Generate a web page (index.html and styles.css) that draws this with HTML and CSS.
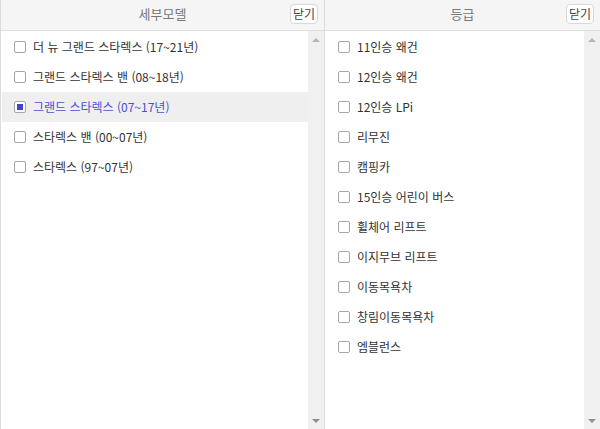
FILE: index.html
```html
<!DOCTYPE html>
<html lang="ko">
<head>
<meta charset="utf-8">
<link rel="stylesheet" href="styles.css">
</head>
<body>
<div class="wrap">
  <section class="panel panel-left">
    <header class="head"><span class="title">세부모델</span><button class="close">닫기</button></header>
    <div class="body">
      <ul class="list">
        <li class="row"><span class="cb"></span><span class="label">더 뉴 그랜드 스타렉스 (17~21년)</span></li>
        <li class="row"><span class="cb"></span><span class="label">그랜드 스타렉스 밴 (08~18년)</span></li>
        <li class="row selected"><span class="cb checked"></span><span class="label">그랜드 스타렉스 (07~17년)</span></li>
        <li class="row"><span class="cb"></span><span class="label">스타렉스 밴 (00~07년)</span></li>
        <li class="row"><span class="cb"></span><span class="label">스타렉스 (97~07년)</span></li>
      </ul>
      <div class="scroll"><span class="arr up"></span><span class="arr down"></span></div>
    </div>
  </section>
  <section class="panel panel-right">
    <header class="head"><span class="title">등급</span><button class="close">닫기</button></header>
    <div class="body">
      <ul class="list">
        <li class="row"><span class="cb"></span><span class="label">11인승 왜건</span></li>
        <li class="row"><span class="cb"></span><span class="label">12인승 왜건</span></li>
        <li class="row"><span class="cb"></span><span class="label">12인승 LPi</span></li>
        <li class="row"><span class="cb"></span><span class="label">리무진</span></li>
        <li class="row"><span class="cb"></span><span class="label">캠핑카</span></li>
        <li class="row"><span class="cb"></span><span class="label">15인승 어린이 버스</span></li>
        <li class="row"><span class="cb"></span><span class="label">휠체어 리프트</span></li>
        <li class="row"><span class="cb"></span><span class="label">이지무브 리프트</span></li>
        <li class="row"><span class="cb"></span><span class="label">이동목욕차</span></li>
        <li class="row"><span class="cb"></span><span class="label">창림이동목욕차</span></li>
        <li class="row"><span class="cb"></span><span class="label">엠블런스</span></li>
      </ul>
      <div class="scroll"><span class="arr up"></span><span class="arr down"></span></div>
    </div>
  </section>
</div>
</body>
</html>
```
FILE: styles.css
```css
* { box-sizing: border-box; }
html, body { margin: 0; padding: 0; }
body {
  width: 600px;
  height: 429px;
  overflow: hidden;
  background: #fff;
  font-family: "Noto Sans CJK KR", "Noto Sans", sans-serif;
  font-size: 12px;
  color: #333;
}
.wrap { display: flex; height: 429px; }
.panel { display: flex; flex-direction: column; height: 100%; }
.panel-left { width: 325px; border-left: 1px solid #dcdcdc; border-right: 1px solid #dcdcdc; }
.panel-right { flex: 1; }
.head {
  position: relative;
  height: 31px;
  flex: none;
  background: #f5f5f5;
  border-bottom: 1px solid #dedede;
  display: flex;
  align-items: center;
  justify-content: center;
}
.title { color: #777; font-size: 13px; line-height: 18px; margin-top: -2px; }
.close {
  position: absolute;
  right: 6px;
  top: 4px;
  height: 20px;
  width: 28px;
  padding: 0;
  background: #fff;
  border: 1px solid #d8d8d8;
  border-radius: 4px;
  font-family: inherit;
  font-size: 12px;
  color: #444;
  line-height: 18px;
}
.panel-right .close { right: 6px; }
.body { flex: 1; display: flex; min-height: 0; }
.list { flex: 1; list-style: none; margin: 0; padding: 1px 0 0 1px; }
.row {
  height: 30px;
  display: flex;
  align-items: center;
  padding-left: 12px;
  gap: 7px;
  color: #333;
}
.row.selected { background: #efefef; color: #4a4fd6; }
.cb {
  width: 12px;
  height: 12px;
  border: 1px solid #a6a6a6;
  border-radius: 2px;
  background: #fff;
  flex: none;
  display: flex;
  align-items: center;
  justify-content: center;
}
.cb.checked::after {
  content: "";
  width: 6px;
  height: 6px;
  background: #3c42d8;
}
.label { line-height: 16px; margin-top: -1px; white-space: nowrap; }
.scroll {
  width: 16px;
  flex: none;
  background: #f0f0f0;
  display: flex;
  flex-direction: column;
  justify-content: space-between;
  align-items: center;
  padding: 7px 0 6px;
}
.arr { width: 0; height: 0; border-left: 4px solid transparent; border-right: 4px solid transparent; }
.arr.up { border-bottom: 4px solid #b5b5b5; }
.arr.down { border-top: 4px solid #8f8f8f; }
```
